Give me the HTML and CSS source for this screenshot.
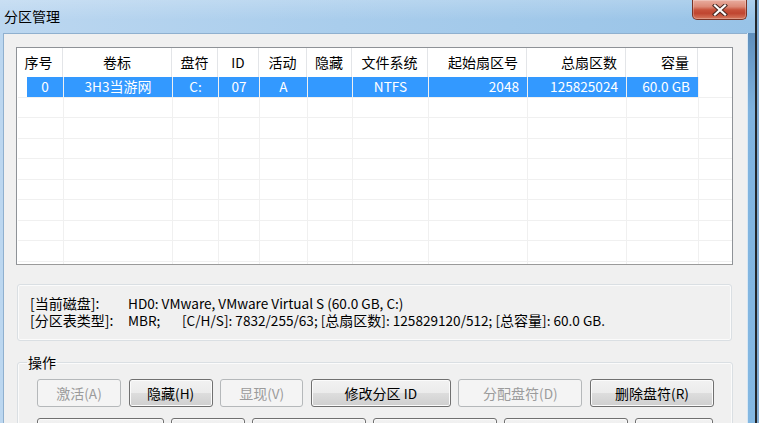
FILE: index.html
```html
<!DOCTYPE html>
<html lang="zh-CN">
<head>
<meta charset="utf-8">
<title>分区管理</title>
<link rel="stylesheet" href="styles.css">
</head>
<body>
<div class="screen">
  <div class="window">
    <div class="titlebar">
      <span class="title">分区管理</span>
      <button class="close" type="button" aria-label="关闭">
        <svg width="16" height="12" viewBox="0 0 16 12">
          <path d="M3 1.5 L13 10.5 M13 1.5 L3 10.5" stroke="#4a2a24" stroke-width="4.2" stroke-linecap="square" fill="none"/>
          <path d="M3 1.5 L13 10.5 M13 1.5 L3 10.5" stroke="#ffffff" stroke-width="2.2" stroke-linecap="square" fill="none"/>
        </svg>
      </button>
    </div>
    <div class="frame">
      <div class="client">
        <div class="listview">
          <div class="lv-row lv-head">
            <div class="c">序号</div>
            <div class="c">卷标</div>
            <div class="c">盘符</div>
            <div class="c en">ID</div>
            <div class="c">活动</div>
            <div class="c">隐藏</div>
            <div class="c">文件系统</div>
            <div class="r">起始扇区号</div>
            <div class="r">总扇区数</div>
            <div class="r">容量</div>
            <div class="fill"></div>
          </div>
          <div class="lv-row sel">
            <div class="c first en">0</div>
            <div class="c"><span class="en">3H3</span>当游网</div>
            <div class="c en">C:</div>
            <div class="c en">07</div>
            <div class="c en">A</div>
            <div class="c"></div>
            <div class="c en">NTFS</div>
            <div class="r en">2048</div>
            <div class="r en">125825024</div>
            <div class="r en">60.0 GB</div>
            <div class="fill"></div>
          </div>
          <div class="lv-row"><div></div><div></div><div></div><div></div><div></div><div></div><div></div><div></div><div></div><div></div><div class="fill"></div></div>
          <div class="lv-row"><div></div><div></div><div></div><div></div><div></div><div></div><div></div><div></div><div></div><div></div><div class="fill"></div></div>
          <div class="lv-row"><div></div><div></div><div></div><div></div><div></div><div></div><div></div><div></div><div></div><div></div><div class="fill"></div></div>
          <div class="lv-row"><div></div><div></div><div></div><div></div><div></div><div></div><div></div><div></div><div></div><div></div><div class="fill"></div></div>
          <div class="lv-row"><div></div><div></div><div></div><div></div><div></div><div></div><div></div><div></div><div></div><div></div><div class="fill"></div></div>
          <div class="lv-row"><div></div><div></div><div></div><div></div><div></div><div></div><div></div><div></div><div></div><div></div><div class="fill"></div></div>
          <div class="lv-row"><div></div><div></div><div></div><div></div><div></div><div></div><div></div><div></div><div></div><div></div><div class="fill"></div></div>
          <div class="lv-row"><div></div><div></div><div></div><div></div><div></div><div></div><div></div><div></div><div></div><div></div><div class="fill"></div></div>
          <div class="lv-row"><div></div><div></div><div></div><div></div><div></div><div></div><div></div><div></div><div></div><div></div><div class="fill"></div></div>
        </div>

        <div class="info">
          <div class="info-line">
            <span class="info-label">[当前磁盘]:</span>
            <span class="en">HD0: VMware, VMware Virtual S (60.0 GB, C:)</span>
          </div>
          <div class="info-line">
            <span class="info-label">[分区表类型]:</span>
            <span class="info-mbr en">MBR;</span>
            <span><span class="en">[C/H/S]: 7832/255/63; [</span>总扇区数<span class="en">]: 125829120/512; [</span>总容量<span class="en">]: 60.0 GB.</span></span>
          </div>
        </div>

        <fieldset class="ops">
          <legend>操作</legend>
          <div class="btn-row row1">
            <button class="btn w84" disabled>激活<span class="en">(A)</span></button>
            <button class="btn w84">隐藏<span class="en">(H)</span></button>
            <button class="btn w83" disabled>显现<span class="en">(V)</span></button>
            <button class="btn w140">修改分区 <span class="en">ID</span></button>
            <button class="btn w124" disabled>分配盘符<span class="en">(D)</span></button>
            <button class="btn w124">删除盘符<span class="en">(R)</span></button>
          </div>
          <div class="btn-row row2">
            <button class="btn w127"></button>
            <button class="btn w74"></button>
            <button class="btn w114"></button>
            <button class="btn w124"></button>
            <button class="btn w124"></button>
            <button class="btn w78"></button>
          </div>
        </fieldset>
      </div>
      <div class="rframe"></div>
    </div>
  </div>
  <div class="edge"></div>
</div>
</body>
</html>
```

FILE: styles.css
```css
* { box-sizing: border-box; }

html, body {
  margin: 0;
  padding: 0;
}

body {
  width: 759px;
  height: 423px;
  overflow: hidden;
  font-family: "Noto Sans CJK SC", "Noto Sans", sans-serif;
  font-size: 14px;
  color: #000;
  background: #6f9cc5;
}

.en { font-size: 13.6px; }

.screen {
  display: flex;
  width: 759px;
  height: 423px;
}

.window {
  width: 755px;
  height: 423px;
  display: flex;
  flex-direction: column;
  background: linear-gradient(to right, #bcd7f0 0%, #a9cdec 45%, #98c3e7 100%);
}

.edge {
  flex: 1;
  border-left: 2px solid #23272b;
  background: #86aed3;
}

.titlebar {
  height: 33px;
  display: flex;
  justify-content: space-between;
  align-items: flex-start;
  background: linear-gradient(to bottom, rgba(255,255,255,0.2), rgba(255,255,255,0) 60%);
}

.title {
  align-self: center;
  padding-left: 4px;
  line-height: 17px;
  margin-top: -1px;
}

.close {
  width: 55px;
  height: 20px;
  margin: 0 8px 0 0;
  padding: 0;
  border: 1px solid #7a3426;
  border-top: none;
  border-radius: 0 0 5px 5px;
  background: linear-gradient(to bottom, #e9ad9f 0%, #dc8a77 35%, #c8523b 52%, #c04530 70%, #d77a5f 100%);
  box-shadow: inset 0 0 0 1px rgba(255,255,255,0.25);
  display: flex;
  align-items: center;
  justify-content: center;
}

.close svg { display: block; }

.frame {
  flex: 1;
  display: flex;
  padding-left: 3px;
  min-height: 0;
}

.client {
  width: 744px;
  background: #f0f0f0;
  border-top: 1px solid #8fb0cf;
  border-left: 1px solid #8fb0cf;
  padding: 13px 14px 0 12px;
  overflow: hidden;
}

.rframe {
  flex: 1;
  border-left: 1px solid #d8e8f5;
  background: linear-gradient(to bottom, #5f8fbc 0%, #7fb3df 20%, #84b8e2 100%);
}

/* list view */
.listview {
  width: 717px;
  height: 218px;
  background: #fff;
  border: 1px solid #8e9297;
  border-bottom-color: #9a9a9a;
  overflow: hidden;
}

.lv-row {
  display: grid;
  grid-template-columns: 46px 109px 46px 41px 48px 45px 76px 99px 99px 72px 1fr;
  height: 20.5px;
  border-bottom: 1px solid #f0f0f0;
  margin-left: 1px;
}

.lv-row > div {
  border-right: 1px solid #f0f0f0;
  white-space: nowrap;
  overflow: hidden;
  line-height: 19px;
}

.lv-row > .fill { border-right: none; }

.lv-head {
  height: 29px;
  border-bottom: none;
  margin-left: 0;
}

.lv-head > div {
  border-right: 1px solid #e3e5e8;
  line-height: 29px;
}

.c { text-align: center; }
.r { text-align: right; padding-right: 8px; }

.lv-head .c:first-child { padding-right: 2px; }

.sel > div {
  background: #3399ff;
  color: #fff;
}

.sel > .first {
  background: linear-gradient(to right, #fff 9px, #3399ff 9px);
  padding-left: 9px;
}

.sel > .fill { background: #fff; }

/* info panel */
.info {
  margin: 19px 1px 0;
  height: 57px;
  border: 1px solid #dadfe3;
  border-radius: 3px;
  padding: 10px 12px 11px;
  box-shadow: inset 0 0 0 1px #fbfbfb;
}

.info-line {
  display: flex;
  align-items: baseline;
  height: 17px;
  line-height: 17px;
  white-space: nowrap;
}

.info-label { width: 98px; flex: none; }
.info-mbr { width: 54px; flex: none; }

/* operations group */
.ops {
  margin: 13px 1px 0;
  border: 1px solid #dadfe3;
  border-radius: 3px;
  padding: 8px 18px 0 19px;
  box-shadow: inset 0 0 0 1px #fbfbfb;
}

.ops legend {
  padding: 0 1px;
  margin-left: -10px;
  line-height: 17px;
}

.btn-row {
  display: flex;
  column-gap: 7px;
}

.row1 { column-gap: 7.6px; }
.row2 { margin-top: 11px; }

.btn {
  height: 28px;
  padding: 0;
  font: inherit;
  color: #000;
  border: 1px solid #707070;
  border-radius: 3px;
  background: linear-gradient(to bottom, #f2f2f2 0%, #ebebeb 50%, #dddddd 51%, #cfcfcf 100%);
  box-shadow: inset 0 0 0 1px #fbfbfb;
  line-height: 26px;
  flex: none;
}

.btn:disabled {
  color: #9b9b9b;
  border-color: #b5b8ba;
  background: #f4f4f4;
  box-shadow: none;
}

.w74 { width: 74px; }
.w78 { width: 78px; }
.w83 { width: 83px; }
.w84 { width: 84px; }
.w114 { width: 114px; }
.w124 { width: 124px; }
.w127 { width: 127px; }
.w140 { width: 140px; }
```
